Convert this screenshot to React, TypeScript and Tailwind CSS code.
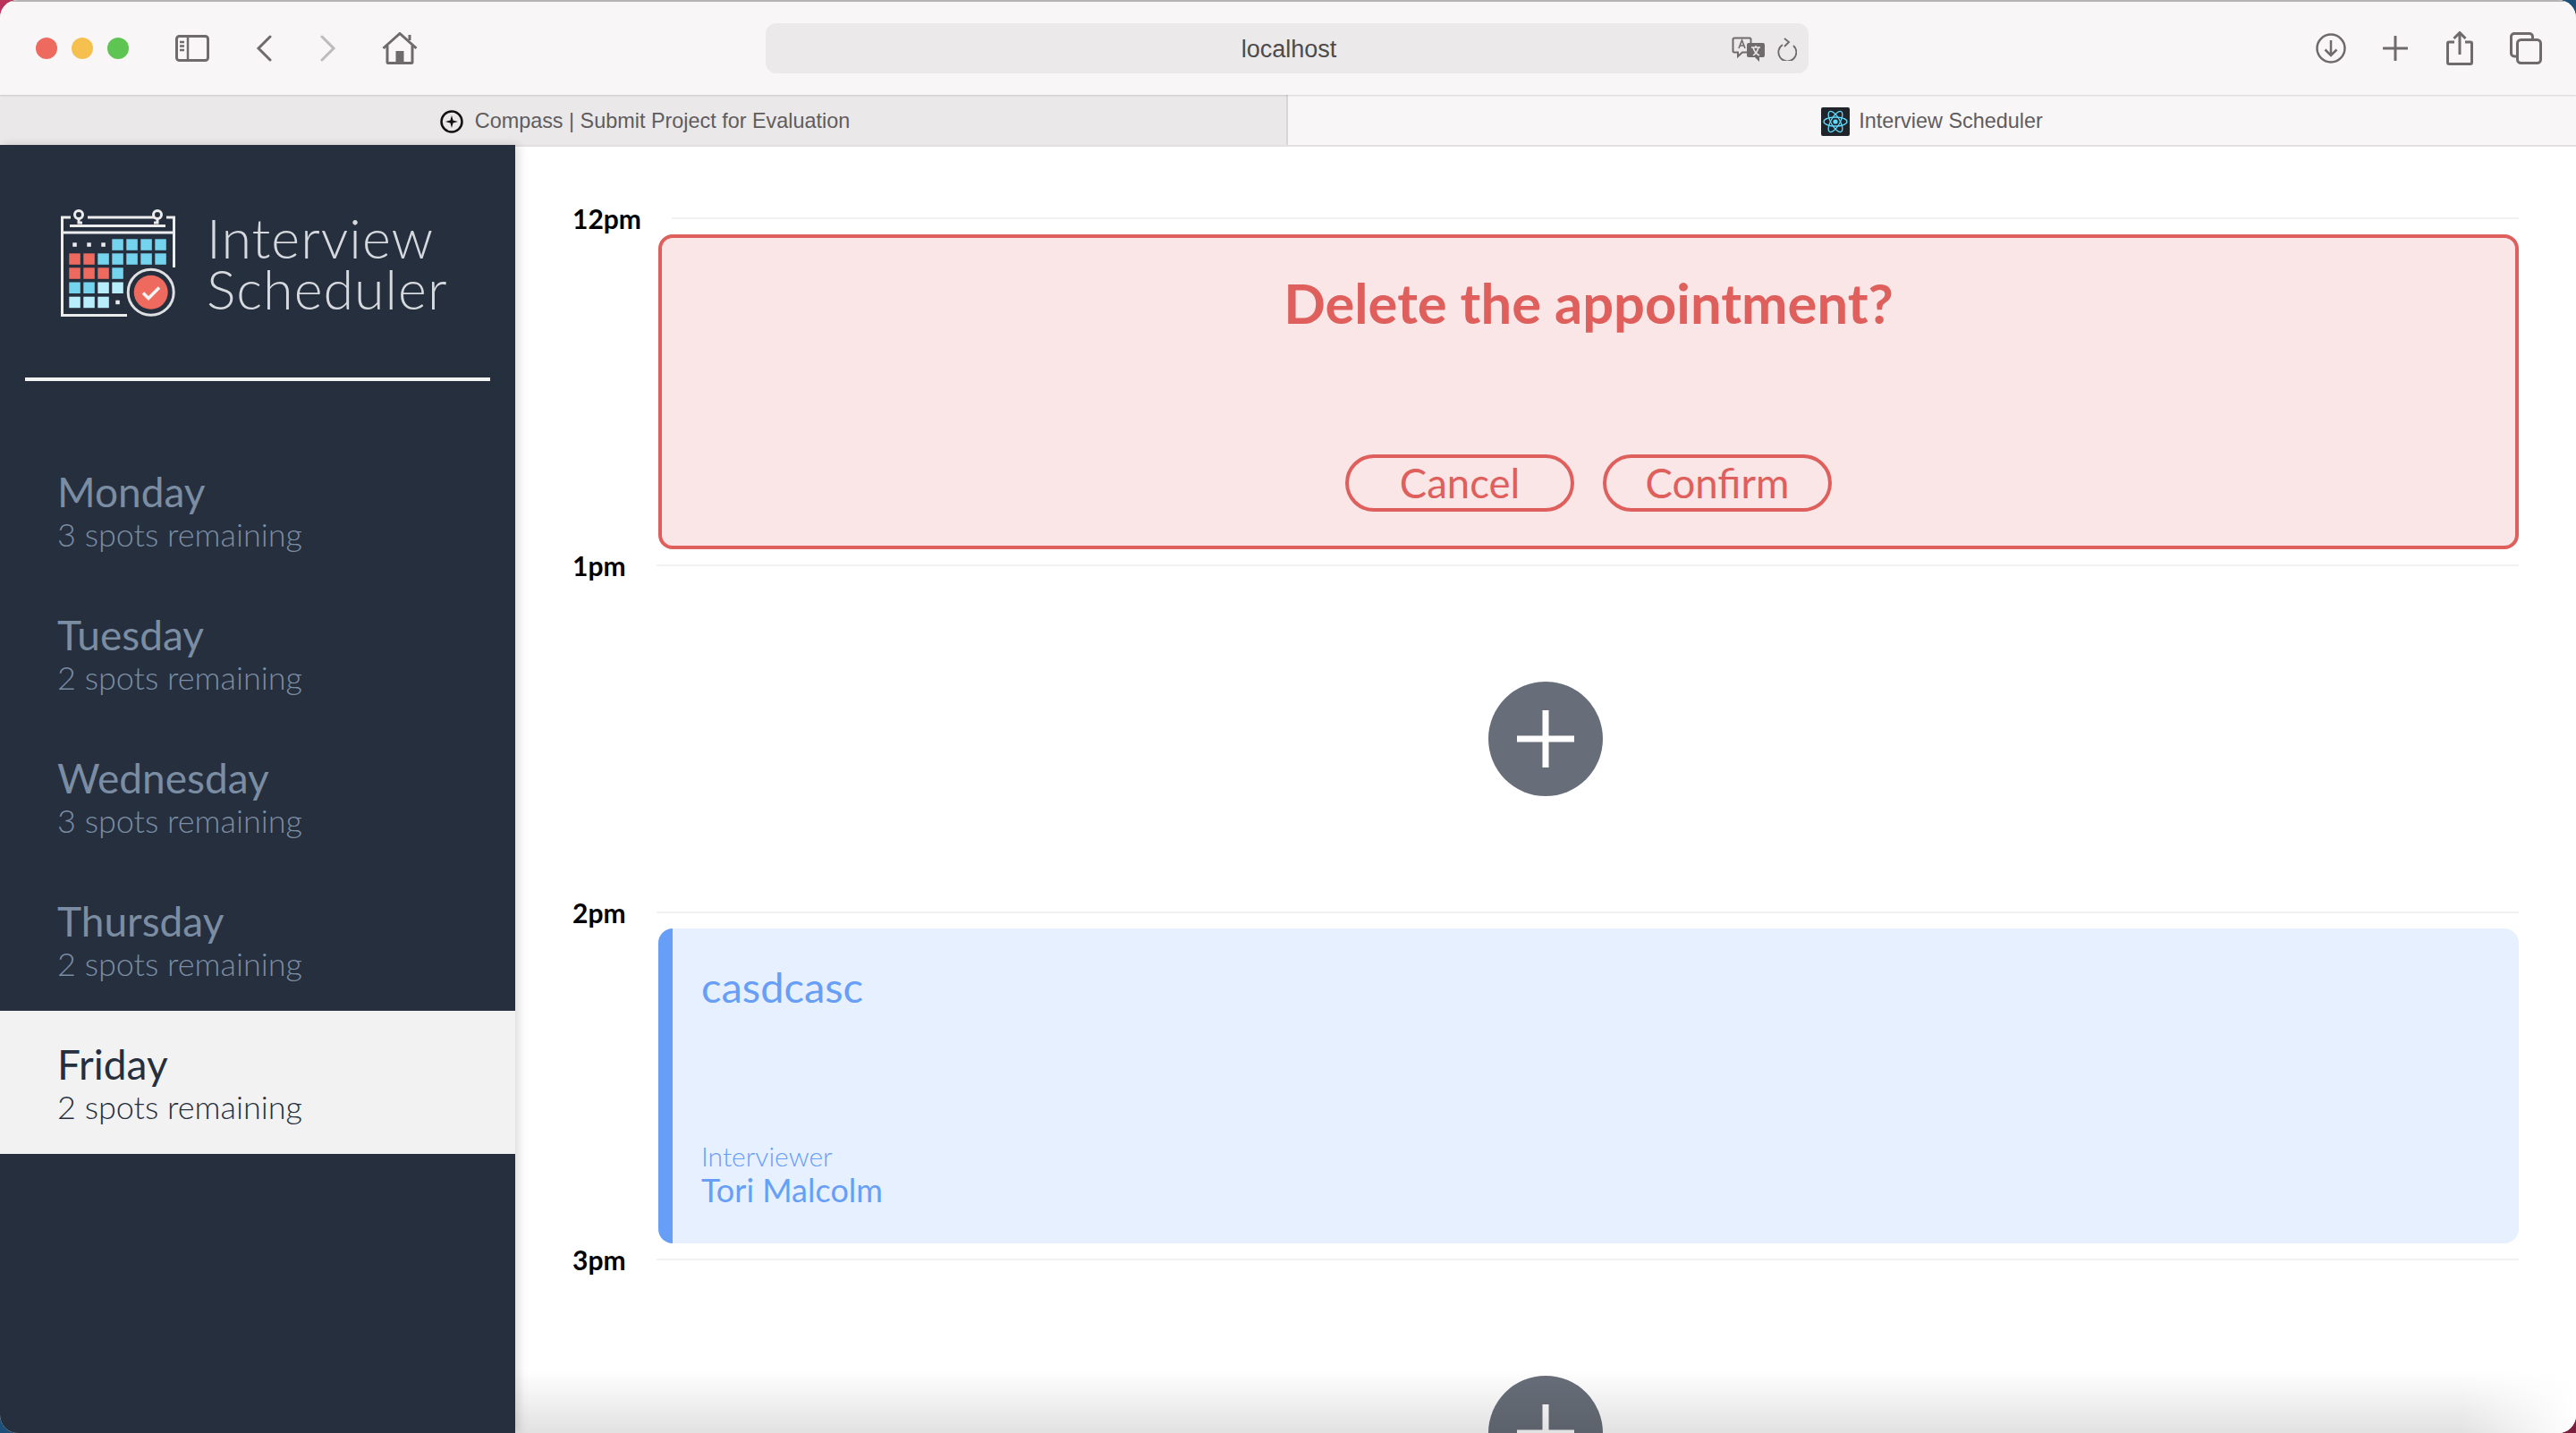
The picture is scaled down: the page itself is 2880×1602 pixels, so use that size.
import React from 'react';

const SANS = 'font-["Lato","Noto_Sans",sans-serif]';

const days = [
  { name: 'Monday', spots: '3 spots remaining' },
  { name: 'Tuesday', spots: '2 spots remaining' },
  { name: 'Wednesday', spots: '3 spots remaining' },
  { name: 'Thursday', spots: '2 spots remaining' },
  { name: 'Friday', spots: '2 spots remaining', selected: true },
];

const Logo = () => {
  const xs = [9.3, 25.3, 41.3, 57.3, 73.3, 89.3, 105.3];
  const ys = [33.3, 49.3, 65.3, 81.5, 97.7];
  const b = '#74d4ee';
  const r = '#ee6a5f';
  const l = '#b8eefb';
  const grid: (string | null)[][] = [
    [null, null, null, b, b, b, b],
    [r, r, b, b, b, b, b],
    [r, r, r, b],
    [b, b, l, l],
    [l, l, l],
  ];
  return (
    <svg width="128" height="120" viewBox="0 0 128 120" fill="none">
      <path d="M11 9H1.5V118.5H74M1.5 26H126.5M126.5 65V9H118M30 9H105M10 18.5H117" stroke="#ececec" strokeWidth="3" />
      <circle cx="20" cy="6" r="4.5" stroke="#ececec" strokeWidth="3" fill="#262f3e" />
      <circle cx="108" cy="6" r="4.5" stroke="#ececec" strokeWidth="3" fill="#262f3e" />
      <path d="M20 10V15H24M108 10V15H104" stroke="#ececec" strokeWidth="3" />
      {grid.map((row, i) =>
        row.map((c, j) => (c ? <rect key={`${i}-${j}`} x={xs[j]} y={ys[i]} width="12.5" height="12.5" fill={c} /> : null))
      )}
      {[0, 1, 2].map((j) => (
        <rect key={j} x={xs[j] + 4} y={ys[0] + 4} width="4.5" height="4.5" fill="#ececec" />
      ))}
      <rect x={xs[3] + 4} y={ys[4] + 4} width="4.5" height="4.5" fill="#ececec" />
      <circle cx="100.7" cy="92.7" r="25.5" stroke="#dfe0e2" strokeWidth="3" fill="#262f3e" />
      <circle cx="100.7" cy="92.7" r="19" fill={r} />
      <path d="M92 93.5L98 99.5L110 87.5" stroke="#f4f4f4" strokeWidth="3.5" />
    </svg>
  );
};

const Sidebar = () => (
  <aside className={`w-[576px] shrink-0 bg-[#262f3e] shadow-[4px_0_10px_rgba(0,0,0,0.14)] z-10 ${SANS}`}>
    <div className="h-[260px] flex items-start pl-[68px] pt-[72px] gap-[35px]">
      <Logo />
      <div className="mt-[3px] text-[61px] leading-[57px] font-light text-[#d6d9dd] tracking-[1px]">
        <div>Interview</div>
        <div>Scheduler</div>
      </div>
    </div>
    <div className="h-1 mx-7 bg-[#f3f3f3]" />
    <nav className="mt-[64px]">
      {days.map((d) => (
        <div
          key={d.name}
          className={`h-[160px] pl-16 pt-[31px] ${d.selected ? 'bg-[#f2f2f2] text-[#262f3e]' : 'text-[#7b8da3]'}`}
        >
          <div className="text-[46px] leading-[57px]">{d.name}</div>
          <div className="text-[36px] leading-[38px] font-light">{d.spots}</div>
        </div>
      ))}
    </nav>
  </aside>
);

const Slot = ({ time, children }: { time: string; children?: React.ReactNode }) => (
  <article className="h-[388px]">
    <header className="h-[19px] flex gap-[34px]">
      <span className="-mt-[15px] text-[30px] leading-[32px] font-bold text-black">{time}</span>
      <div className="flex-1 h-[2px] bg-[#f1f1f1]" />
    </header>
    {children}
  </article>
);

const AddButton = () => (
  <div className="h-[352px] flex items-center justify-center">
    <div className="w-32 h-32 rounded-full bg-[#686e79] flex items-center justify-center">
      <svg width="64" height="64" viewBox="0 0 64 64">
        <path d="M32 0V64M0 32H64" stroke="#fff" strokeWidth="7" />
      </svg>
    </div>
  </div>
);

const PillButton = ({ label }: { label: string }) => (
  <button className="w-64 h-16 rounded-[34px] border-4 border-[#de5f5c] text-[45.5px] leading-none text-[#de5f5c]">
    {label}
  </button>
);

const Schedule = () => (
  <main className={`relative flex-1 bg-white border-t-2 border-[#e2e0e1] pt-[79px] pl-16 pr-16 overflow-hidden ${SANS}`}>
    <Slot time="12pm">
      <section className="ml-24 h-[352px] rounded-2xl border-4 border-[#de5f5c] bg-[#fae6e6] flex flex-col items-center justify-between pt-[34px] pb-[38px]">
        <h2 className="text-[61.5px] leading-[76px] font-bold text-[#de5f5c]">Delete the appointment?</h2>
        <div className="flex gap-8">
          <PillButton label="Cancel" />
          <PillButton label="Confirm" />
        </div>
      </section>
    </Slot>
    <Slot time="1pm">
      <AddButton />
    </Slot>
    <Slot time="2pm">
      <section className="ml-24 h-[352px] rounded-2xl border-l-16 border-[#679ff8] bg-[#e6f0fe] pl-8 pt-[34px] pb-10 flex flex-col justify-between text-[#679ff8]">
        <div className="text-[47px] leading-[62px]">casdcasc</div>
        <div>
          <div className="text-[30px] leading-[36px] font-light">Interviewer</div>
          <div className="text-[36px] leading-[40px]">Tori Malcolm</div>
        </div>
      </section>
    </Slot>
    <Slot time="3pm">
      <AddButton />
    </Slot>
    <div className="absolute left-0 right-0 bottom-0 h-[70px] bg-gradient-to-t from-[#0000001e] to-transparent" />
    <div className="absolute right-0 bottom-0 h-[70px] w-[130px] bg-gradient-to-l from-white to-transparent" />
  </main>
);

const ic = '#6f6b6c';

const Toolbar = () => (
  <div className="h-[106px] flex items-center bg-[#f9f6f7] border-t-2 border-[#b5b3b4] shadow-[0_1px_2px_rgba(0,0,0,0.14)] z-20">
    <div className="w-[856px] shrink-0 flex items-center pl-10">
      <div className="flex gap-4">
        <div className="w-6 h-6 rounded-full bg-[#ef6a5e]" />
        <div className="w-6 h-6 rounded-full bg-[#f6c04f]" />
        <div className="w-6 h-6 rounded-full bg-[#5fc552]" />
      </div>
      <svg className="ml-[52px]" width="38" height="30" viewBox="0 0 38 30" fill="none">
        <rect x="1.5" y="1.5" width="35" height="27" rx="3" stroke={ic} strokeWidth="3" />
        <path d="M14 2V28M5 8H10M5 12.5H10M5 17H10" stroke={ic} strokeWidth="2.5" />
      </svg>
      <svg className="ml-[52px]" width="18" height="30" viewBox="0 0 18 30" fill="none">
        <path d="M16 2L3 15L16 28" stroke={ic} strokeWidth="3" strokeLinecap="round" />
      </svg>
      <svg className="ml-[54px]" width="18" height="30" viewBox="0 0 18 30" fill="none">
        <path d="M2 2L15 15L2 28" stroke="#bdbbbc" strokeWidth="3" strokeLinecap="round" />
      </svg>
      <svg className="ml-[51px]" width="40" height="36" viewBox="0 0 40 36" fill="none">
        <path d="M1.5 18L20 1.5L38.5 18M6 15V33.5a1 1 0 0 0 1 1H33a1 1 0 0 0 1-1V15M31 9V3" stroke={ic} strokeWidth="3" />
        <rect x="15.5" y="21" width="9" height="13" fill={ic} />
      </svg>
    </div>
    <div className={`relative w-[1166px] h-14 pl-1 pt-0.5 rounded-xl bg-[#ebe9ea] flex items-center justify-center text-[27px] text-[#4e4b4c] font-["Liberation_Sans",sans-serif]`}>
      localhost
      <svg className="absolute left-[1080px] top-[15px]" width="38" height="28" viewBox="0 0 38 28" fill="none">
        <path d="M3 1.5H20a1.5 1.5 0 0 1 1.5 1.5V16a1.5 1.5 0 0 1-1.5 1.5H12L7 22V17.5H3A1.5 1.5 0 0 1 1.5 16V3A1.5 1.5 0 0 1 3 1.5Z" stroke={ic} strokeWidth="2" fill="#ebe9ea" />
        <path d="M8 13L11.5 4L15 13M9 10H14" stroke={ic} strokeWidth="1.6" />
        <path d="M19 7H35a2 2 0 0 1 2 2V21a2 2 0 0 1-2 2H31V28L26 23H19a2 2 0 0 1-2-2V9a2 2 0 0 1 2-2Z" fill={ic} />
        <path d="M22 12H32M27 10V12M24 21C27 19 29 16 30 12M24 12C25 16 27 19 31 21" stroke="#ebe9ea" strokeWidth="1.5" />
      </svg>
      <svg className="absolute left-[1129px] top-[14px]" width="24" height="28" viewBox="0 0 24 28" fill="none">
        <path d="M8 8A10 10 0 1 0 20 9M10 1L15 5L10 10" stroke={ic} strokeWidth="1.8" transform="translate(0 2)" />
      </svg>
    </div>
    <div className="flex-1 flex items-center justify-end pr-[38px] gap-[41px]">
      <svg width="34" height="34" viewBox="0 0 34 34" fill="none">
        <circle cx="17" cy="17" r="15.5" stroke={ic} strokeWidth="2.5" />
        <path d="M17 8V25M10.5 18.5L17 25L23.5 18.5" stroke={ic} strokeWidth="2.5" />
      </svg>
      <svg className="mr-[2px]" width="28" height="28" viewBox="0 0 28 28" fill="none">
        <path d="M14 1V27M1 14H27" stroke={ic} strokeWidth="3" strokeLinecap="round" />
      </svg>
      <svg width="30" height="38" viewBox="0 0 30 38" fill="none">
        <path d="M9 12H3a1.5 1.5 0 0 0-1.5 1.5V35a1.5 1.5 0 0 0 1.5 1.5H27a1.5 1.5 0 0 0 1.5-1.5V13.5A1.5 1.5 0 0 0 27 12H21M15 26V2M8.5 8L15 1.5L21.5 8" stroke={ic} strokeWidth="3" />
      </svg>
      <svg width="36" height="36" viewBox="0 0 36 36" fill="none">
        <path d="M7 27H5a3.5 3.5 0 0 1-3.5-3.5V5A3.5 3.5 0 0 1 5 1.5H22A3.5 3.5 0 0 1 25.5 5V8" stroke={ic} strokeWidth="3" />
        <rect x="8.5" y="8.5" width="26" height="26" rx="4" stroke={ic} strokeWidth="3" />
      </svg>
    </div>
  </div>
);

const TabBar = () => (
  <div className="h-14 flex text-[23.4px] font-['Liberation_Sans',sans-serif] text-[#605c5e]">
    <div className="w-[1440px] pl-1 pt-[3px] bg-[#eae8e9] border-r-2 border-[#d8d6d7] flex items-center justify-center gap-[13px]">
      <svg width="26" height="26" viewBox="0 0 26 26" fill="none">
        <circle cx="13" cy="13" r="11.5" stroke="#111" strokeWidth="2.5" />
        <path d="M13 6L14.5 11.5L20 13L14.5 14.5L13 20L11.5 14.5L6 13L11.5 11.5Z" fill="#111" />
      </svg>
      <span>Compass | Submit Project for Evaluation</span>
    </div>
    <div className="flex-1 pt-[3px] bg-[#f9f6f7] flex items-center justify-center gap-[10px]">
      <svg width="32" height="32" viewBox="0 0 32 32" fill="none">
        <rect width="32" height="32" rx="2" fill="#20252b" />
        <g stroke="#61dafb" strokeWidth="1.3">
          <ellipse cx="16" cy="16" rx="13" ry="5" />
          <ellipse cx="16" cy="16" rx="13" ry="5" transform="rotate(60 16 16)" />
          <ellipse cx="16" cy="16" rx="13" ry="5" transform="rotate(120 16 16)" />
        </g>
        <circle cx="16" cy="16" r="2.6" fill="#61dafb" />
      </svg>
      <span>Interview Scheduler</span>
    </div>
  </div>
);

export default function App() {
  return (
    <div className="w-[2880px] h-[1602px] bg-[conic-gradient(#1d4f78_0_25%,#7a1f3d_25%_50%,#1d4f78_50%_75%,#b9345c_75%_100%)] overflow-hidden">
      <div className="h-full rounded-[20px] overflow-hidden flex flex-col bg-white">
        <Toolbar />
        <TabBar />
        <div className="flex-1 flex min-h-0">
          <Sidebar />
          <Schedule />
        </div>
      </div>
    </div>
  );
}
